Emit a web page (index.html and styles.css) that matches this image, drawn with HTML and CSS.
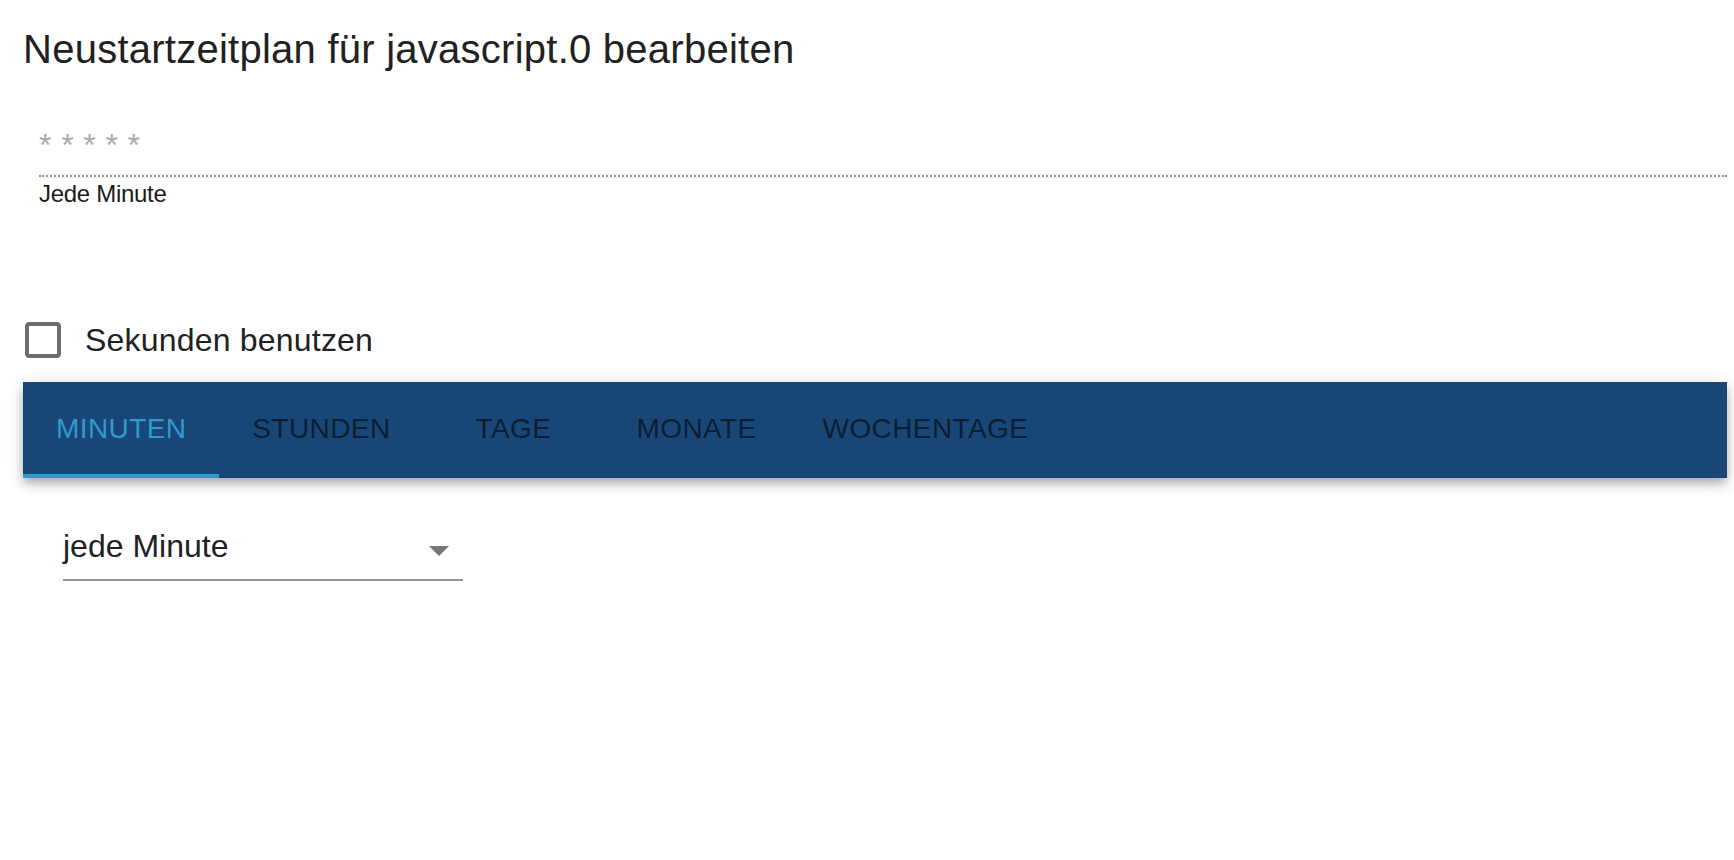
FILE: index.html
```html
<!DOCTYPE html>
<html lang="de">
<head>
<meta charset="utf-8">
<title>Neustartzeitplan</title>
<link rel="stylesheet" href="styles.css">
</head>
<body>
<div class="page">
  <h2 class="title">Neustartzeitplan für javascript.0 bearbeiten</h2>

  <div class="cron-field">
    <input class="cron-input" type="text" placeholder="* * * * *" readonly>
    <div class="cron-text">Jede Minute</div>
  </div>

  <label class="check-row">
    <span class="check-icon">
      <svg viewBox="0 0 24 24" width="48" height="48"><path d="M19 5v14H5V5h14m0-2H5c-1.11 0-2 .9-2 2v14c0 1.1.89 2 2 2h14c1.1 0 2-.9 2-2V5c0-1.1-.9-2-2-2z"/></svg>
    </span>
    <span class="check-label">Sekunden benutzen</span>
  </label>

  <div class="tabbar">
    <div class="tab active">Minuten</div>
    <div class="tab">Stunden</div>
    <div class="tab">Tage</div>
    <div class="tab">Monate</div>
    <div class="tab">Wochentage</div>
  </div>

  <div class="select">
    <div class="select-value">jede Minute</div>
    <svg class="select-arrow" viewBox="0 0 24 24" width="48" height="48"><path d="M7 10l5 5 5-5z"/></svg>
  </div>
</div>
</body>
</html>
```

FILE: styles.css
```css
html, body {
  margin: 0;
  padding: 0;
  background: #ffffff;
}

.page {
  padding: 25px 7px 0 23px;
  font-family: "Liberation Sans", Arial, Helvetica, sans-serif;
  color: #212121;
}

.title {
  margin: 0;
  font-size: 40px;
  line-height: 48px;
  font-weight: 400;
  letter-spacing: 0.25px;
  color: #212121;
}

.cron-field {
  margin: 52px 0 0 16px;
}

.cron-input {
  display: block;
  box-sizing: content-box;
  width: 100%;
  height: 40px;
  margin: 0;
  padding: 0 0 10px 0;
  border: none;
  border-bottom: 2px dotted #949494;
  outline: none;
  background: transparent;
  font-family: "Liberation Sans", Arial, sans-serif;
  font-size: 32px;
  line-height: 40px;
  letter-spacing: 0.4px;
  color: #aaaaaa;
}

.cron-input::placeholder {
  color: #aaaaaa;
  opacity: 1;
}

.cron-text {
  margin-top: 3px;
  font-size: 24px;
  line-height: 28px;
  letter-spacing: -0.3px;
  color: #1a1a1a;
}

.check-row {
  display: flex;
  align-items: center;
  margin: 108px 0 0 -4px;
  height: 48px;
}

.check-icon {
  display: flex;
  width: 48px;
  height: 48px;
}

.check-icon svg {
  fill: #6b6b6b;
}

.check-label {
  margin-left: 18px;
  font-size: 32px;
  line-height: 48px;
  letter-spacing: 0.2px;
  color: #212121;
}

.tabbar {
  display: flex;
  margin-top: 18px;
  height: 96px;
  background: #174677;
  box-shadow: 0 4px 8px -2px rgba(0, 0, 0, 0.2), 0 8px 10px 0 rgba(0, 0, 0, 0.14), 0 2px 20px 0 rgba(0, 0, 0, 0.12);
}

.tab {
  box-sizing: border-box;
  min-width: 180px;
  height: 96px;
  padding: 1px 33px 0 33px;
  line-height: 91px;
  text-align: center;
  font-size: 28px;
  letter-spacing: 0.4px;
  text-transform: uppercase;
  color: rgba(0, 0, 0, 0.6);
  border-bottom: 4px solid transparent;
}

.tab.active {
  color: #3399cc;
  border-bottom-color: #3399cc;
}

.select {
  position: relative;
  width: 400px;
  margin: 37px 0 0 40px;
  padding: 12px 0 14px 0;
  border-bottom: 2px solid #949494;
}

.select-value {
  font-size: 32px;
  line-height: 38px;
  color: #212121;
}

.select-arrow {
  position: absolute;
  right: 0;
  top: 11px;
  fill: #757575;
}
```
